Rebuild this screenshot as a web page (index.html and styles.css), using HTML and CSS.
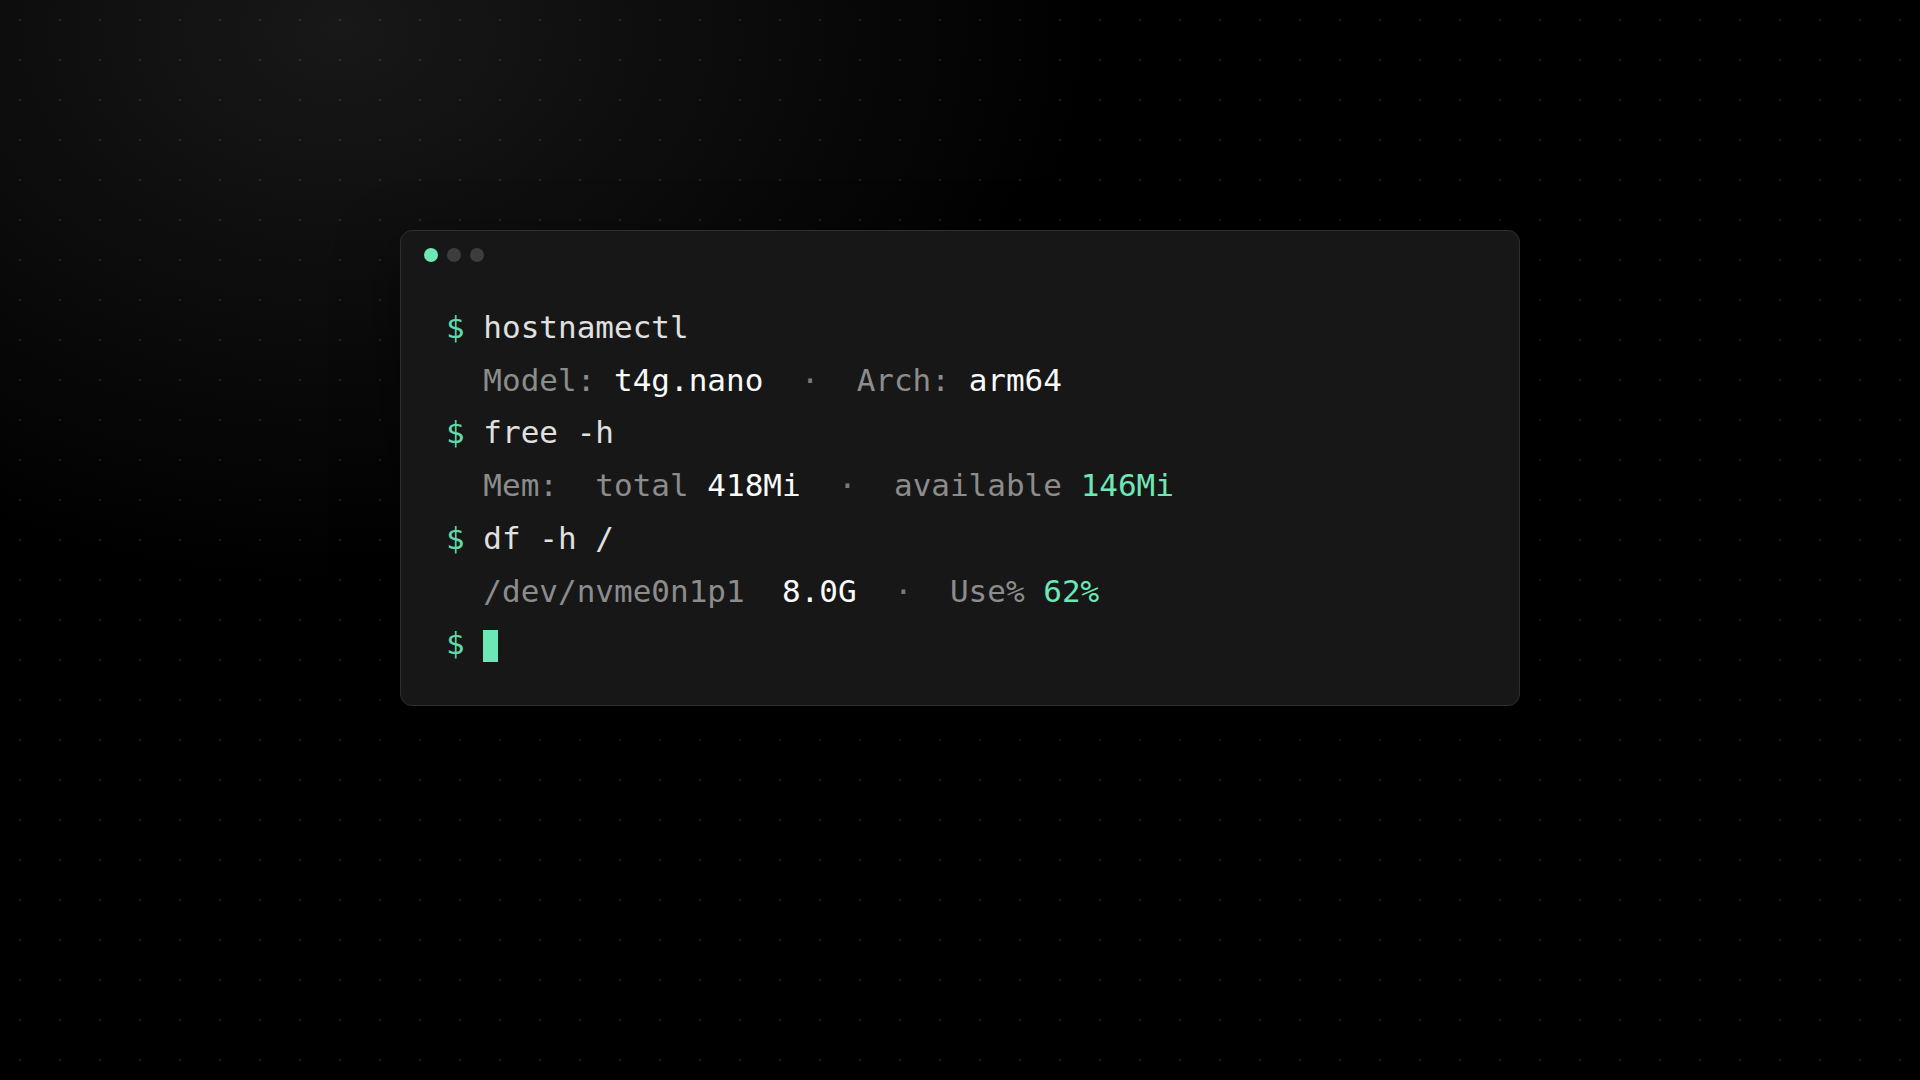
FILE: index.html
```html
<!DOCTYPE html>
<html lang="en">
<head>
<meta charset="utf-8">
<title>Terminal</title>
<link rel="stylesheet" href="styles.css">
</head>
<body>
<main class="stage">
  <section class="term">
    <div class="bar">
      <span class="light light-on"></span>
      <span class="light"></span>
      <span class="light"></span>
    </div>
    <div class="body">
      <div class="line"><span class="ps">$</span> <span class="cmd">hostnamectl</span></div>
      <div class="line out">  <span class="lbl">Model:</span> <span class="val">t4g.nano</span>  <span class="sep">·</span>  <span class="lbl">Arch:</span> <span class="val">arm64</span></div>
      <div class="line"><span class="ps">$</span> <span class="cmd">free -h</span></div>
      <div class="line out">  <span class="lbl">Mem:  total</span> <span class="val">418Mi</span>  <span class="sep">·</span>  <span class="lbl">available</span> <span class="ok">146Mi</span></div>
      <div class="line"><span class="ps">$</span> <span class="cmd">df -h /</span></div>
      <div class="line out">  <span class="lbl">/dev/nvme0n1p1</span>  <span class="val">8.0G</span>  <span class="sep">·</span>  <span class="lbl">Use%</span> <span class="ok">62%</span></div>
      <div class="line"><span class="ps">$</span> <span class="cursor"></span></div>
    </div>
  </section>
</main>
</body>
</html>
```
FILE: styles.css
```css
html, body {
  margin: 0;
  padding: 0;
  height: 100%;
}
body {
  background-color: #000;
  background-image:
    radial-gradient(circle at center, rgba(255,255,255,0.10) 0, rgba(255,255,255,0.10) 1px, transparent 1.6px),
    radial-gradient(ellipse 760px 560px at 340px 30px, #181818 0%, #0d0d0d 45%, rgba(0,0,0,0) 100%);
  background-size: 40px 40px, 100% 100%;
  background-repeat: repeat, no-repeat;
  font-family: "DejaVu Sans Mono", "Liberation Mono", monospace;
  overflow: hidden;
}
.stage {
  display: flex;
  justify-content: center;
  align-items: flex-start;
  padding-top: 230px;
  height: 1080px;
  box-sizing: border-box;
}
.term {
  width: 1120px;
  box-sizing: border-box;
  background: #171717;
  border: 1px solid #2f2f2f;
  border-radius: 12px;
  box-shadow: 0 20px 60px rgba(0,0,0,0.5);
}
.bar {
  display: flex;
  gap: 9px;
  padding: 17px 22px 0 23px;
}
.light {
  width: 14px;
  height: 14px;
  border-radius: 50%;
  background: #3d3d3d;
}
.light-on {
  background: #6ee7b7;
}
.body {
  padding: 39px 43px 35px 45px;
  font-size: 31px;
  line-height: 52.7px;
  color: #e2e2e2;
}
.line {
  white-space: pre;
}
.ps {
  color: #62d9a8;
}
.cmd {
  color: #e0e0e0;
}
.lbl {
  color: #8c8c8c;
}
.sep {
  color: #7a7a7a;
}
.val {
  color: #fafafa;
}
.ok {
  color: #6ee7b7;
}
.cursor {
  display: inline-block;
  width: 15px;
  height: 32px;
  background: #6ee7b7;
  vertical-align: -8px;
}
```
